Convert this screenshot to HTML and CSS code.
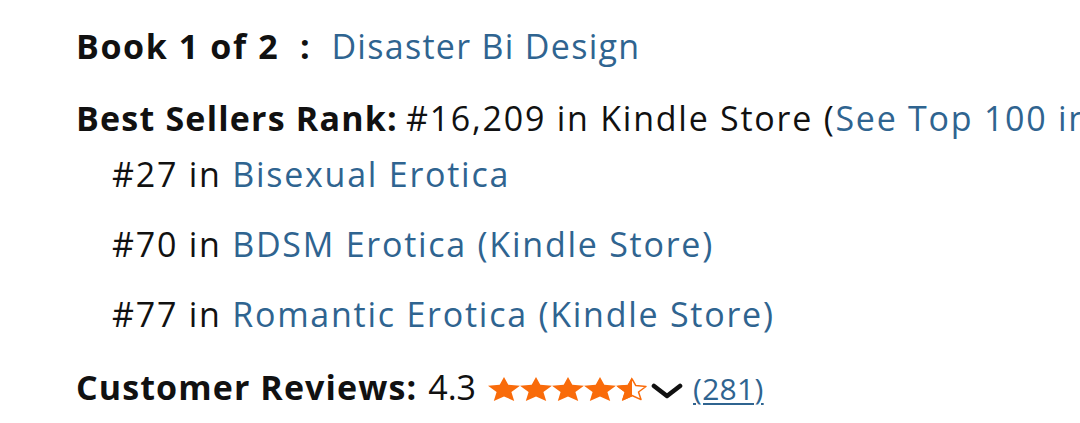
FILE: index.html
```html
<!DOCTYPE html>
<html>
<head>
<meta charset="utf-8">
<link rel="stylesheet" href="styles.css">
</head>
<body>
<div class="details">
  <div class="row series"><span class="label">Book 1 of 2&nbsp; :</span> <a class="link">Disaster Bi Design</a></div>
  <div class="rank">
    <div class="row rank-main"><span class="label">Best Sellers Rank:</span> #16,209 in Kindle Store (<a class="link">See Top 100 in Kindle Store</a>)</div>
    <ul class="sub">
      <li>#27 in <a class="link">Bisexual Erotica</a></li>
      <li>#70 in <a class="link">BDSM Erotica (Kindle Store)</a></li>
      <li>#77 in <a class="link">Romantic Erotica (Kindle Store)</a></li>
    </ul>
  </div>
  <div class="row reviews">
    <span class="label">Customer Reviews:</span>
    <span class="score">4.3</span>
    <span class="stars">
      <svg width="32" height="24" viewBox="0 0 32 24"><path d="M16 0L20.3 7.8L32 8.8L23.4 15L26.2 24L16 19.4L5.8 24L8.6 15L0 8.8L11.7 7.8Z" fill="#f96b0a"/></svg>
      <svg width="32" height="24" viewBox="0 0 32 24"><path d="M16 0L20.3 7.8L32 8.8L23.4 15L26.2 24L16 19.4L5.8 24L8.6 15L0 8.8L11.7 7.8Z" fill="#f96b0a"/></svg>
      <svg width="32" height="24" viewBox="0 0 32 24"><path d="M16 0L20.3 7.8L32 8.8L23.4 15L26.2 24L16 19.4L5.8 24L8.6 15L0 8.8L11.7 7.8Z" fill="#f96b0a"/></svg>
      <svg width="32" height="24" viewBox="0 0 32 24"><path d="M16 0L20.3 7.8L32 8.8L23.4 15L26.2 24L16 19.4L5.8 24L8.6 15L0 8.8L11.7 7.8Z" fill="#f96b0a"/></svg>
      <svg width="32" height="24" viewBox="0 0 32 24"><path d="M16 1.8L19.8 8.6L30 9.5L22.5 15L25 22.6L16 18.5L7 22.6L9.5 15L2 9.5L12.2 8.6Z" fill="none" stroke="#f96b0a" stroke-width="1.5" stroke-linejoin="round"/><path d="M16 0L11.7 7.8L0 8.8L8.6 15L5.8 24L16 19.4Z" fill="#f96b0a"/></svg>
    </span>
    <svg class="chev" width="34" height="16" viewBox="0 0 34 16"><path d="M4 3l13 10 13-10" fill="none" stroke="#111" stroke-width="4.6" stroke-linecap="round" stroke-linejoin="round"/></svg>
    <a class="link count">(281)</a>
  </div>
</div>
</body>
</html>
```
FILE: styles.css
```css
html, body {
  margin: 0;
  padding: 0;
  background: #fff;
  width: 1080px;
  height: 423px;
  overflow: hidden;
}
body {
  font-family: "Open Sans", "Noto Sans", sans-serif;
  font-size: 34px;
  letter-spacing: 1.75px;
  color: #111;
  line-height: 1;
}
.details {
  padding: 29px 0 0 76px;
  white-space: nowrap;
}
.label {
  font-weight: 700;
  letter-spacing: 1.2px;
}
.series .label { letter-spacing: 1.6px; margin-right: 20px; }
.link {
  color: #2f6490;
  text-decoration: none;
}
.row {
  height: 36px;
  display: flex;
  align-items: baseline;
}
.series .link { letter-spacing: 1.3px; }
.rank { margin-top: 36px; }
.rank-main .label { margin-right: 8px; }
.sub {
  list-style: none;
  margin: 0;
  padding: 0 0 0 36px;
}
.sub li {
  height: 70px;
  padding-top: 20px;
  box-sizing: border-box;
}
.sub li:first-child { height: 50px; padding-top: 0; margin-top: 20px; }
.reviews {
  margin-top: 23px;
}
.reviews .label { letter-spacing: 1.1px; margin-right: 11px; }
.score { letter-spacing: 0; margin-right: 12px; }
.stars {
  display: flex;
  gap: 0;
  align-self: center;
  margin-top: 2px;
}
.chev {
  align-self: center;
  margin: 6px 9px 0 2px;
}
.count {
  font-size: 30px;
  letter-spacing: 0.3px;
  text-decoration: underline;
  text-underline-offset: 3px;
  text-decoration-thickness: 2px;
}
```
